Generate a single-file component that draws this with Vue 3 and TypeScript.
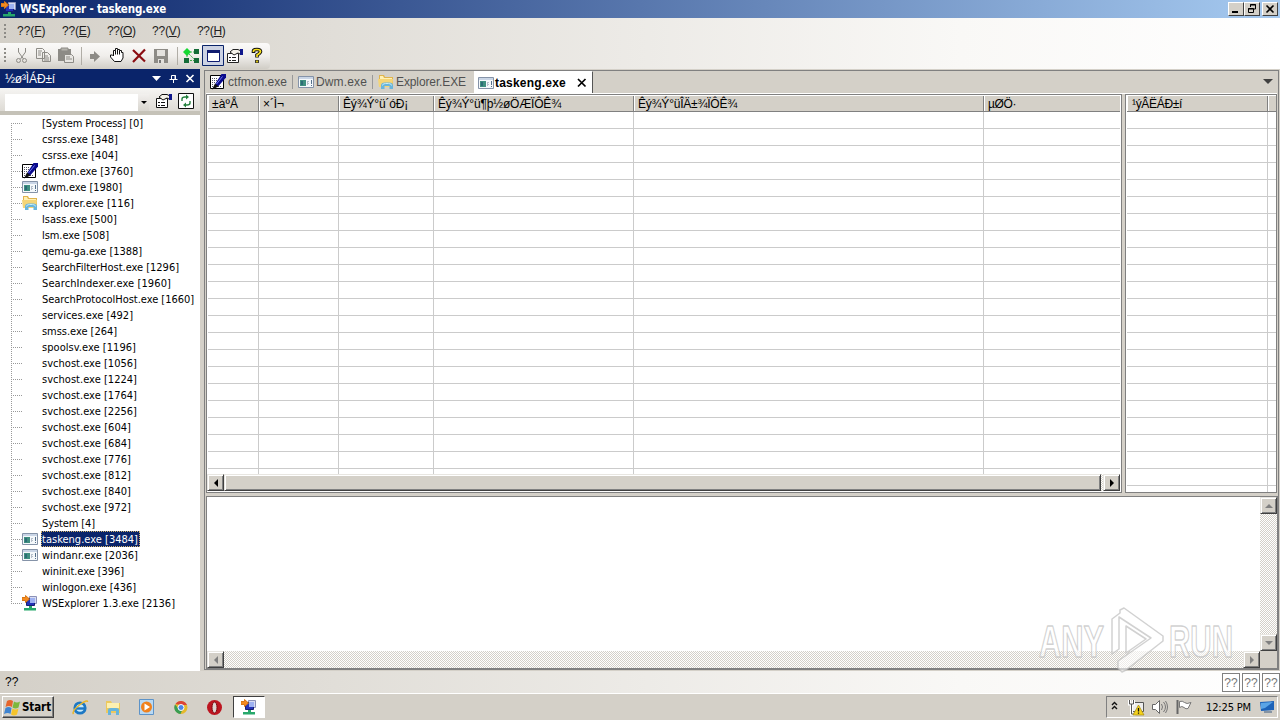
<script setup lang="ts">
import { h, type Directive, type FunctionalComponent } from 'vue'

type IconName = 'pen' | 'win' | 'folder' | 'app'
interface Proc { t: string; w: number; icon?: IconName; sel?: boolean }

// Stretches or tightens a label so that it takes the given width in pixels.
const vFit: Directive<HTMLElement, number> = {
  mounted(el, { value }) {
    const n = (el.textContent ?? '').length
    const w = el.getBoundingClientRect().width
    el.style.letterSpacing = `${(value - w) / n}px`
  },
}

const p = (d: string, fill: string, stroke?: string) => h('path', { d, fill, stroke })
const drawings: Record<IconName, () => ReturnType<typeof h>[]> = {
  pen: () => [
    p('M.5 1.5H13.5V14.5H.5Z', '#fff', '#000'),
    p('M2 4.500h1M4 4.500h1M6 4.500h1M2 6.500h1M4 6.500h1M6 6.500h1M2 8.500h1M4 8.500h1M2 10.500h1M2 12.500h1M8 12.500h1M10 12.500h1', 'none', '#556'),
    p('M11.5 0h4.500v3.500L9 11.500l-5 3 1.500-5z', '#0a0a8c'),
    p('M12.5 2.5L6.5 10', 'none', '#6d78f0'),
    p('M2 15.500l3-6 3.500 3z', '#111'),
  ],
  win: () => [
    p('M.5 2.5H15.5V13.5H.5Z', '#f4f8fb', '#8593a8'),
    p('M1 3H15V5H1Z', '#c9d5e6'),
    p('M2 6h6v6H2z', '#3f8f80'),
    p('M3 7h2v4H3z', '#2c6c76'),
    p('M9.5 7v4M10 7.5h1M10 9.5h1', 'none', '#b6bfcb'),
    p('M13.5 6v4M13.5 11v1', 'none', '#55708a'),
  ],
  folder: () => [
    p('M1 1h5l1 2h8v10H1z', '#dfb44e'),
    p('M2 2h3l1 2h8v2H2z', '#fff1b4'),
    p('M0 5h15l-1 8H1z', '#f5d576'),
    p('M3 15V11.500q0-3 4-3h4q4 0 4 3v3.500h-3.500v-3H6.500v3z', '#69b5dc'),
    p('M4.500 11.500q0-2 3-2h3q3 0 3 2', 'none', '#c4ebf7'),
  ],
  app: () => [
    p('M7.500 1.500h7v7h-7z', '#d8ddf2', '#8c91b8'),
    p('M4.500 3.500h8v7h-8z', '#2433b8', '#171f72'),
    p('M8 3h5v5H8z', '#9fb2f2'),
    p('M0 2.500h3.500V.5l4 3.500-4 3.500V5.500H0z', '#f58a1f', '#d87816'),
    p('M7 11h3v2h4v2.500H2V13h5z', '#27a86b'),
  ],
}
const Ico: FunctionalComponent<{ name: IconName }> = (props) =>
  h('svg', { width: 16, height: 16, viewBox: '0 0 16 16' }, drawings[props.name]())
Ico.props = ['name']

const menus = ['F', 'E', 'O', 'V', 'H']
const procs: Proc[] = [
  { t: '[System Process] [0]', w: 101 },
  { t: 'csrss.exe [348]', w: 76 },
  { t: 'csrss.exe [404]', w: 76 },
  { t: 'ctfmon.exe [3760]', w: 91, icon: 'pen' },
  { t: 'dwm.exe [1980]', w: 80, icon: 'win' },
  { t: 'explorer.exe [116]', w: 92, icon: 'folder' },
  { t: 'lsass.exe [500]', w: 75 },
  { t: 'lsm.exe [508]', w: 67 },
  { t: 'qemu-ga.exe [1388]', w: 100 },
  { t: 'SearchFilterHost.exe [1296]', w: 137 },
  { t: 'SearchIndexer.exe [1960]', w: 129 },
  { t: 'SearchProtocolHost.exe [1660]', w: 152 },
  { t: 'services.exe [492]', w: 91 },
  { t: 'smss.exe [264]', w: 75 },
  { t: 'spoolsv.exe [1196]', w: 94 },
  { t: 'svchost.exe [1056]', w: 95 },
  { t: 'svchost.exe [1224]', w: 95 },
  { t: 'svchost.exe [1764]', w: 95 },
  { t: 'svchost.exe [2256]', w: 95 },
  { t: 'svchost.exe [604]', w: 89 },
  { t: 'svchost.exe [684]', w: 89 },
  { t: 'svchost.exe [776]', w: 89 },
  { t: 'svchost.exe [812]', w: 89 },
  { t: 'svchost.exe [840]', w: 89 },
  { t: 'svchost.exe [972]', w: 89 },
  { t: 'System [4]', w: 53 },
  { t: 'taskeng.exe [3484]', w: 96, icon: 'win', sel: true },
  { t: 'windanr.exe [2036]', w: 96, icon: 'win' },
  { t: 'wininit.exe [396]', w: 82 },
  { t: 'winlogon.exe [436]', w: 94 },
  { t: 'WSExplorer 1.3.exe [2136]', w: 133, icon: 'app' },
]
const tabs: { t: string; w: number; icon: IconName }[] = [
  { t: 'ctfmon.exe', w: 59, icon: 'pen' },
  { t: 'Dwm.exe', w: 51, icon: 'win' },
  { t: 'Explorer.EXE', w: 70, icon: 'folder' },
]
const cols = [
  { t: '±àºÅ', w: 26 },
  { t: '×´Ì¬', w: 21 },
  { t: 'Êý¾Ý°ü´óÐ¡', w: 65 },
  { t: 'Êý¾Ý°ü¶þ½øÖÆÏÔÊ¾', w: 123 },
  { t: 'Êý¾Ý°üÎÄ±¾ÏÔÊ¾', w: 99 },
  { t: 'µØÖ·', w: 28 },
]
</script>

<template>
  <div class="screen">
    <header class="title">
      <Ico name="app" />
      <b v-fit="146">WSExplorer - taskeng.exe</b>
      <div class="caps">
        <i><svg width="14" height="12"><path d="M3 9h6" stroke="#000" stroke-width="2" /></svg></i>
        <i><svg width="14" height="12"><path d="M5.500 4V1.500h5v4.500H9M5 2h6M3.500 5.500h5v4h-5zM3 6h6" fill="none" stroke="#000" /></svg></i>
        <i class="x"><svg width="14" height="12"><path d="M3.500 2.500l7 7m0-7l-7 7" stroke="#000" stroke-width="1.600" /></svg></i>
      </div>
    </header>

    <div class="bars">
      <nav class="menu">
        <span class="grip" />
        <span v-for="m in menus" :key="m" class="mi"><span v-fit="28.5">??(<u>{{ m }}</u>)</span></span>
      </nav>
      <div class="tools">
        <svg width="270" height="26" viewBox="0 43 270 26" fill="none" stroke="#8d8b86">
          <path d="M5 48v16" stroke="#8d8b86" stroke-width="2" stroke-dasharray="2 2" />
          <path d="M18.500 48v4l5 7M25.500 48v4l-5 7" />
          <circle cx="18.500" cy="60.500" r="2" /><circle cx="24.500" cy="60.500" r="2" />
          <path d="M36.500 48.500h6l2 2v8h-8zM42.500 52.500h5l3 3v6h-8zM38 51h4M38 53h3M38 55h3M44 56h4M44 58h5M44 60h5" />
          <path d="M58 49h13v12H58z" fill="#8d8b86" stroke="none" /><path d="M61 48h7v3h-7z" fill="#b5b3ad" />
          <path d="M64.500 54.500h7l2 2v6h-9z" fill="#e8e6e2" /><path d="M66 57h4M66 59h6" />
          <path d="M81.500 47v18M177.500 47v18" stroke="#b0ada6" />
          <path d="M90 54h4v-3l6 5.500-6 5.500v-3h-4z" fill="#8d8b86" stroke="none" />
          <path d="M114.500 61.500l-4-4.500v-2h2l1 1v-5.500h2v-2h2v1h2v1h2v2h1.500v5.500l-2 3.500zM115.500 50.500v4M117.500 49.500v5M119.500 50.500v4" stroke="#111" fill="#fff" />
          <path d="M133 50l12 11.500M145 49.500L133 62" stroke="#8b0d12" stroke-width="2.200" />
          <path d="M154 49h14v14h-14z" fill="#8d8b86" stroke="none" /><path d="M157 50h8v6h-8zM158 59h6v4h-6z" fill="#e4e2de" stroke="none" /><path d="M159 60h2v3h-2z" fill="#777" stroke="none" />
          <path d="M187 52l9 9M187 52h8M187 52v8M187 60.500h8" stroke="#42a94c" stroke-dasharray="2 1" />
          <path d="M187 48l4 4-4 4-4-4z" fill="#16d832" stroke="none" />
          <path d="M194 49h5v5h-5zM194 58h5v5h-5zM184 58h5v5h-5z" fill="#146c37" stroke="none" />
          <path d="M202.500 45.500h21v20h-21z" fill="#ccd2e3" stroke="#0a246a" />
          <path d="M207.500 50.500h12v11h-12z" fill="#fff" stroke="#101c70" /><path d="M207 50h13v3h-13z" fill="#101c70" stroke="none" />
          <path d="M227.500 53.500h11v9h-11zM229 57.500h2M232 57.500h4M229 60.500h2M232 60.500h4" fill="#fff" stroke="#222" />
          <path d="M230 52l3-2.500h5l3 1.500v3.500l-3-1.500-4 2z" fill="#f5f3ea" stroke="#222" /><path d="M240 49h3v6h-3z" fill="#10188c" stroke="none" />
          <path d="M253.500 53v-2q0-1.500 3.500-1.500t3.500 2q0 1.500-3.500 3.500v2.500M257 60v3" stroke="#111" stroke-width="3.600" />
          <path d="M253.500 52v-1q0-1.500 3.500-1.500t3.500 2q0 1.500-3.500 3.500v2M257 60.500v2" stroke="#f7e01c" stroke-width="1.700" />
        </svg>
      </div>
    </div>

    <main class="work">
      <aside class="side">
        <div class="stitle">
          <span v-fit="50">½ø³ÌÁÐ±í</span>
          <svg width="48" height="19" viewBox="150 69 48 19" fill="none" stroke="#fff">
            <path d="M152 76h9l-4.500 5z" fill="#fff" stroke="none" />
            <path d="M171.500 75.500h4v4h-4zM175 75v5M169.500 79.500h8M173.500 80v3" />
            <path d="M186.500 75l7 7m0-7l-7 7" stroke-width="1.600" />
          </svg>
        </div>
        <div class="filter">
          <div class="combo"><span /></div>
          <svg width="44" height="24" viewBox="154 89 44 24" fill="none" stroke="#111">
            <path d="M156.500 98.500h11v9h-11zM158 102.500h2M161 102.500h4M158 105.500h2M161 105.500h4" fill="#fff" />
            <path d="M159 97l3-2.500h5l3 1.500v3.500l-3-1.500-4 2z" fill="#f5f3ea" /><path d="M169 94h3v6h-3z" fill="#10188c" stroke="none" />
            <path d="M178.500 93.500h15v15h-15z" fill="#fff" />
            <path d="M182 101v-2q0-2 3-2h1.500M190 101v2q0 2-3 2h-1.500" stroke="#24813e" stroke-width="1.400" />
            <path d="M186 94.500l3 2.500-3 2.500zM186 102.500v5l-3-2.500z" fill="#24813e" stroke="none" />
          </svg>
        </div>
        <ul class="tree">
          <li v-for="x in procs" :key="x.t">
            <span class="branch" /><span class="ic"><Ico v-if="x.icon" :name="x.icon" /></span>
            <span class="lab" :class="{ sel: x.sel }"><span v-fit="x.w">{{ x.t }}</span></span>
          </li>
        </ul>
      </aside>

      <section class="docs">
        <div class="tabs">
          <div v-for="t in tabs" :key="t.t" class="tab"><Ico :name="t.icon" /><span v-fit="t.w">{{ t.t }}</span></div>
          <div class="tab on"><Ico name="win" /><b v-fit="71">taskeng.exe</b>
            <svg class="close" width="10" height="10"><path d="M1 1l7.500 7.500M8.500 1L1 8.500" stroke="#000" stroke-width="1.700" /></svg>
          </div>
          <svg class="more" width="10" height="6"><path d="M0 0h10L5 5z" fill="#404040" /></svg>
        </div>
        <div class="grids">
          <div class="grid main">
            <div class="hd"><div v-for="c in cols" :key="c.t"><span v-fit="c.w">{{ c.t }}</span></div></div>
            <div class="rows"><i v-for="c in cols" :key="c.t" /></div>
            <div class="hbar">
              <span class="sb"><svg width="8" height="8"><path d="M6 0v8L2 4z" /></svg></span>
              <span class="sb thumb" />
              <span class="sb"><svg width="8" height="8"><path d="M2 0v8l4-4z" /></svg></span>
            </div>
          </div>
          <div class="grid filt">
            <div class="hd"><div><span v-fit="50">¹ýÂËÁÐ±í</span></div><div /></div>
            <div class="rows"><i /><i /></div>
          </div>
        </div>
        <div class="out">
          <div class="paper" />
          <div class="vbar">
            <span class="sb"><svg width="8" height="8"><path d="M0 6h8L4 2z" fill="#808080" /></svg></span>
            <span class="sb"><svg width="8" height="8"><path d="M0 2h8L4 6z" fill="#808080" /></svg></span>
          </div>
          <div class="hbar">
            <span class="sb"><svg width="8" height="8"><path d="M6 0v8L2 4z" fill="#808080" /></svg></span>
            <span class="sb"><svg width="8" height="8"><path d="M2 0v8l4-4z" fill="#808080" /></svg></span>
          </div>
        </div>
      </section>
    </main>

    <footer class="status"><span class="msg">??</span><span class="box">??</span><span class="box">??</span><span class="box">??</span></footer>

    <div class="taskbar">
      <button class="start">
        <svg width="18" height="17" viewBox="0 0 18 17">
          <path d="M3 2q3-2 6 0L8 8Q5 6 1.500 8z" fill="#e5652c" /><path d="M10 2.500q3 2 6 0L14.500 8.500q-3 2-6 0z" fill="#7cb83c" />
          <path d="M1.500 9q3-2 6 0L6.500 15Q4 13 0 15z" fill="#3f84d0" /><path d="M8.500 9.500q3 2 6 0L13 15.500q-3 2-6 0z" fill="#f5c42c" />
        </svg><b v-fit="29">Start</b>
      </button>
      <svg class="quick" width="164" height="20" viewBox="70 697 164 20">
        <circle cx="80" cy="708" r="5.200" fill="#c9eaf8" stroke="#1d78c4" stroke-width="2.800" /><path d="M76 708.500h9" stroke="#1d78c4" stroke-width="2.400" /><path d="M73.500 714q-2-3 6-9t8-3" fill="none" stroke="#e8b62c" stroke-width="1.500" />
        <path d="M106 701h5l1 2h8v10h-14z" fill="#ecc95e" /><path d="M107 703h12v5h-12z" fill="#fdf0b0" /><path d="M108 715v-5q0-2 3-2h5q3 0 3 2v5h-3v-4h-5v4z" fill="#66b4dc" />
        <path d="M139.500 699.500h14v15h-14z" fill="#b9d9f3" stroke="#5d93c8" /><circle cx="146.500" cy="707" r="5.500" fill="#f0811c" /><path d="M144.500 703.500v7l5.500-3.500z" fill="#fff" />
        <circle cx="181" cy="707.500" r="6.500" fill="#e5b92c" /><path d="M175.500 704a6.500 6.500 0 0 1 11.500 1H181z" fill="#dc4437" /><path d="M175 704.500a6.500 6.500 0 0 0 5.500 9.500l2-4.500-4-1z" fill="#3a9d52" /><circle cx="181" cy="707.500" r="3" fill="#4b86e8" stroke="#fff" />
        <ellipse cx="214.500" cy="707.500" rx="7.500" ry="7.500" fill="#bd1520" /><ellipse cx="214.500" cy="707.500" rx="2.500" ry="5.500" fill="#ded6d2" stroke="#7e0910" />
      </svg>
      <div class="run"><Ico name="app" /></div>
      <div class="tray">
        <svg width="90" height="20" viewBox="1108 697 90 20" fill="none" stroke="#111">
          <path d="M1113 705l2.500-2.500 2.500 2.500M1113 709l2.500-2.500 2.500 2.500" stroke-width="1.400" />
          <path d="M1133.500 702.500h11v9h-11z" fill="#eee" stroke="#555" /><path d="M1130.500 700v4h4v-4M1132.500 704v10h4" stroke="#fff" stroke-width="3" /><path d="M1130.500 700v4h4v-4M1132.500 704v10h4" stroke="#555" />
          <path d="M1139.500 705l5.500 10h-11z" fill="#f5d21c" stroke="#a58a10" stroke-width=".7" /><path d="M1139.500 708v3.500M1139.500 712.500v1.200" stroke-width="1.300" />
          <path d="M1153.500 704.500h3l4-4v13l-4-4h-3z" fill="#fff" stroke="#666" /><path d="M1162.500 704q2 3 0 6M1164.500 702q4 5 0 10M1166.500 701q4 6 0 12" stroke="#777" />
          <path d="M1178.500 700v14" stroke="#666" stroke-width="2" /><path d="M1180.500 701.500q3-1 5 1t6.500 0l-3 6q-2 1-4-1t-4.500 0z" fill="#fff" stroke="#777" />
        </svg>
        <span v-fit="45">12:25 PM</span>
        <svg class="desk" width="15" height="14"><path d="M0 2l14-1v9L1 11z" fill="#1c62b8" /><path d="M1 3l12-1-8 6-4 1z" fill="#5aa4e6" /><path d="M4 12h8" stroke="#39587e" /></svg>
      </div>
    </div>

    <svg class="mark" width="220" height="74" viewBox="1036 602 220 74">
      <g font-family="Liberation Sans" font-size="45" font-weight="bold" fill="#fff" fill-opacity=".6" stroke="#bdbdbd" stroke-opacity=".7" stroke-width="1.500" stroke-linejoin="round">
        <text x="1039" y="657" textLength="65" lengthAdjust="spacingAndGlyphs">ANY</text>
        <text x="1169" y="657" textLength="64" lengthAdjust="spacingAndGlyphs">RUN</text>
        <path fill-rule="evenodd" d="M1112 654V619l8-6V610l4-2 39 28v5l-37 29-4 2-4-4v-7l33-23-32-21v32z" />
        <path d="M1126 626l20 13-20 14z" />
      </g>
    </svg>
  </div>
</template>

<style>
html, body { margin: 0; overflow: hidden; }
</style>
<style scoped>
* { box-sizing: border-box; }
.screen { position: relative; width: 1280px; height: 720px; display: flex; flex-direction: column; overflow: hidden; background: #d4d0c8; color: #000; font: 11px/16px "DejaVu Sans Condensed", "DejaVu Sans", sans-serif; white-space: nowrap; }
svg { display: block; flex: none; }
.title { height: 18px; flex: none; display: flex; align-items: center; gap: 3px; padding: 0 2px 0 1px; color: #fff; background: linear-gradient(90deg, #0a246a, #a6caf0); }
.title b { font: bold 11.5px/18px "DejaVu Sans Condensed", sans-serif; }
.caps { margin-left: auto; display: flex; }
.caps i { width: 16px; height: 14px; border: 1px solid; border-color: #fff #404040 #404040 #fff; background: #d4d0c8; }
.caps .x { margin-left: 2px; }
.bars { height: 51px; flex: none; background: linear-gradient(90deg, #d4d0c8, #f9f8f6 75%, #fff); }
.menu { height: 25px; display: flex; align-items: center; padding-left: 4px; font: 12px/25px "Liberation Sans", sans-serif; color: #222; }
.menu .mi { padding-top: 1px; }
.grip { width: 2px; height: 14px; margin-right: 11px; background: repeating-linear-gradient(#8d8b86 0 2px, transparent 2px 4px); }
.mi { width: 45px; }
.tools { width: 270px; height: 26px; border-radius: 0 4px 4px 0; background: linear-gradient(#fbfaf9, #f0eeeb 50%, #d0cdc6); }
.work { height: 602px; flex: none; display: flex; }
.side { width: 200px; display: flex; flex-direction: column; background: #fff; }
.stitle { height: 19px; flex: none; display: flex; justify-content: space-between; padding-left: 5px; background: #0a246a; color: #fff; font: 12px/20px "Liberation Sans", sans-serif; }
.stitle svg { margin-right: 2px; }
.filter { height: 27px; flex: none; display: flex; justify-content: space-between; padding: 1px 2px 0 5px; background: linear-gradient(#f6f5f3, #dedbd5 85%, #c5c2b8 86%); }
.combo { width: 144px; height: 17px; margin-top: 5px; background: #fff; display: flex; justify-content: flex-end; }
.combo span { width: 11px; background: linear-gradient(#f2f0ee, #d8d5ce); display: flex; align-items: center; justify-content: center; }
.combo span::after { content: ""; border: 3px solid transparent; border-top-color: #000; border-bottom: 0; }
.tree { list-style: none; margin: 0; padding: 0; }
.tree li { height: 16px; display: flex; padding-left: 11px; }
.branch { width: 11px; flex: none; background: repeating-linear-gradient(90deg, #999 0 1px, transparent 1px 2px) 0 8px / 11px 1px no-repeat, repeating-linear-gradient(#999 0 1px, transparent 1px 2px) 0 0 / 1px 16px no-repeat; }
.tree li:first-child .branch { background-position: 0 8px, 0 8px; }
.tree li:last-child .branch { background-size: 11px 1px, 1px 9px; }
.ic { width: 19px; flex: none; }
.lab { height: 16px; line-height: 18px; padding: 0 1px; font-size: 11px; }
.sel { background: #0a246a; color: #fff; outline: 1px dotted #d5b56a; outline-offset: -1px; padding-right: 2px; }
.docs { width: 1075px; margin: 1px 0 0 4px; height: 600px; display: flex; flex-direction: column; border: 1px solid #808080; padding: 0 0 0 1px; }
.tabs { height: 22px; flex: none; display: flex; align-items: center; padding: 0 4px; font: 12px/20px "Liberation Sans", sans-serif; color: #505050; }
.tab { position: relative; display: flex; align-items: center; gap: 2px; margin-right: 11px; }
.tab:not(.on)::after { content: ""; position: absolute; right: -6px; top: 3px; height: 14px; border-left: 1px solid #999; }
.tab:nth-child(3)::after { display: none; }
.tab.on { height: 22px; margin-left: -3px; padding: 0 5px 0 3px; gap: 1px; color: #000; background: #fff; border-right: 1px solid #555; border-left: 1px solid #fff; border-top: 1px solid #fff; }
.close { margin-left: 10px; }
.more { margin: 0 1px 0 auto; }
.grids { height: 400px; flex: none; display: flex; justify-content: space-between; border-top: 1px solid #fff; margin-right: 1px; }
.grid { height: 399px; border: 1px solid #808080; padding-left: 1px; display: flex; flex-direction: column; background: #fff; }
.grid.main { width: 916px; padding: 0 1px 1px; }
.filt { width: 152px; }
.hd { height: 17px; flex: none; display: grid; background: #d4d0c8; border-bottom: 1px solid #808080; border-top: 1px solid #fff; font: 12px/17px "Liberation Sans", sans-serif; }
.hd div { padding-left: 4px; border-right: 1px solid #808080; box-shadow: inset 1px 0 #fff; overflow: hidden; }
.filt .hd div { padding-left: 5px; }
.hd div:last-child { border-right: 0; }
.main .hd, .main .rows { grid-template-columns: 51px 80px 95px 200px 350px 1fr; }
.filt .hd, .filt .rows { grid-template-columns: 141px 1fr; }
.rows { flex: 1; display: grid; background: repeating-linear-gradient(transparent 0 16px, #cbcbcb 16px 17px); }
.rows i { border-right: 1px solid #cbcbcb; }
.rows i:last-child { border-right: 0; }
.hbar, .vbar { display: flex; background: repeating-conic-gradient(#fff 0 25%, #d4d0c8 0 50%) 0 0 / 2px 2px; }
.hbar { height: 17px; flex: none; justify-content: space-between; }
.main .hbar { justify-content: flex-start; margin-left: -1px; }
.main .thumb + .sb { margin-left: auto; }
.sb { width: 17px; height: 17px; flex: none; display: flex; align-items: center; justify-content: center; background: #d4d0c8; border: 1px solid; border-color: #e8e6e1 #404040 #404040 #e8e6e1; box-shadow: inset 1px 1px #fff, inset -1px -1px #808080; }
.sb.thumb { width: 877px; }
.out { height: 173px; margin-top: 3px; flex: none; display: grid; grid-template: 1fr 17px / 1fr 17px; border: 1px solid #808080; }
.paper { background: #fff; }
.vbar { flex-direction: column; justify-content: space-between; }
.status { height: 22px; flex: none; display: flex; align-items: center; gap: 2px; padding-left: 5px; background: linear-gradient(90deg, #d4d0c8, #f9f8f6 75%, #fff); font: 12px/18px "Liberation Sans", sans-serif; }
.msg { margin-right: auto; }
.box { width: 18px; height: 19px; border: 1px solid #808080; color: #777; text-align: center; background: #fff; }
.taskbar { height: 27px; flex: none; display: flex; align-items: center; border-top: 1px solid #fff; padding: 2px; background: #d4d0c8; }
.start { width: 52px; height: 22px; padding: 0 1px; display: flex; align-items: center; border: 1px solid; border-color: #fff #404040 #404040 #fff; box-shadow: inset -1px -1px #808080; background: #d4d0c8; font: bold 11.5px "DejaVu Sans Condensed", sans-serif; color: #000; }
.quick { margin-left: 16px; }
.run { width: 32px; height: 22px; display: flex; align-items: center; justify-content: center; background: #fff; border: 1px solid; border-color: #404040 #fff #fff #404040; margin-left: -1px; }
.tray { width: 172px; height: 22px; margin-left: auto; display: flex; align-items: center; border: 1px solid; border-color: #808080 #fff #fff #808080; }
.tray span { margin-left: 9px; padding-top: 1px; }
.desk { margin-left: 9px; }
.mark { position: absolute; left: 1036px; top: 602px; overflow: visible; }
</style>
